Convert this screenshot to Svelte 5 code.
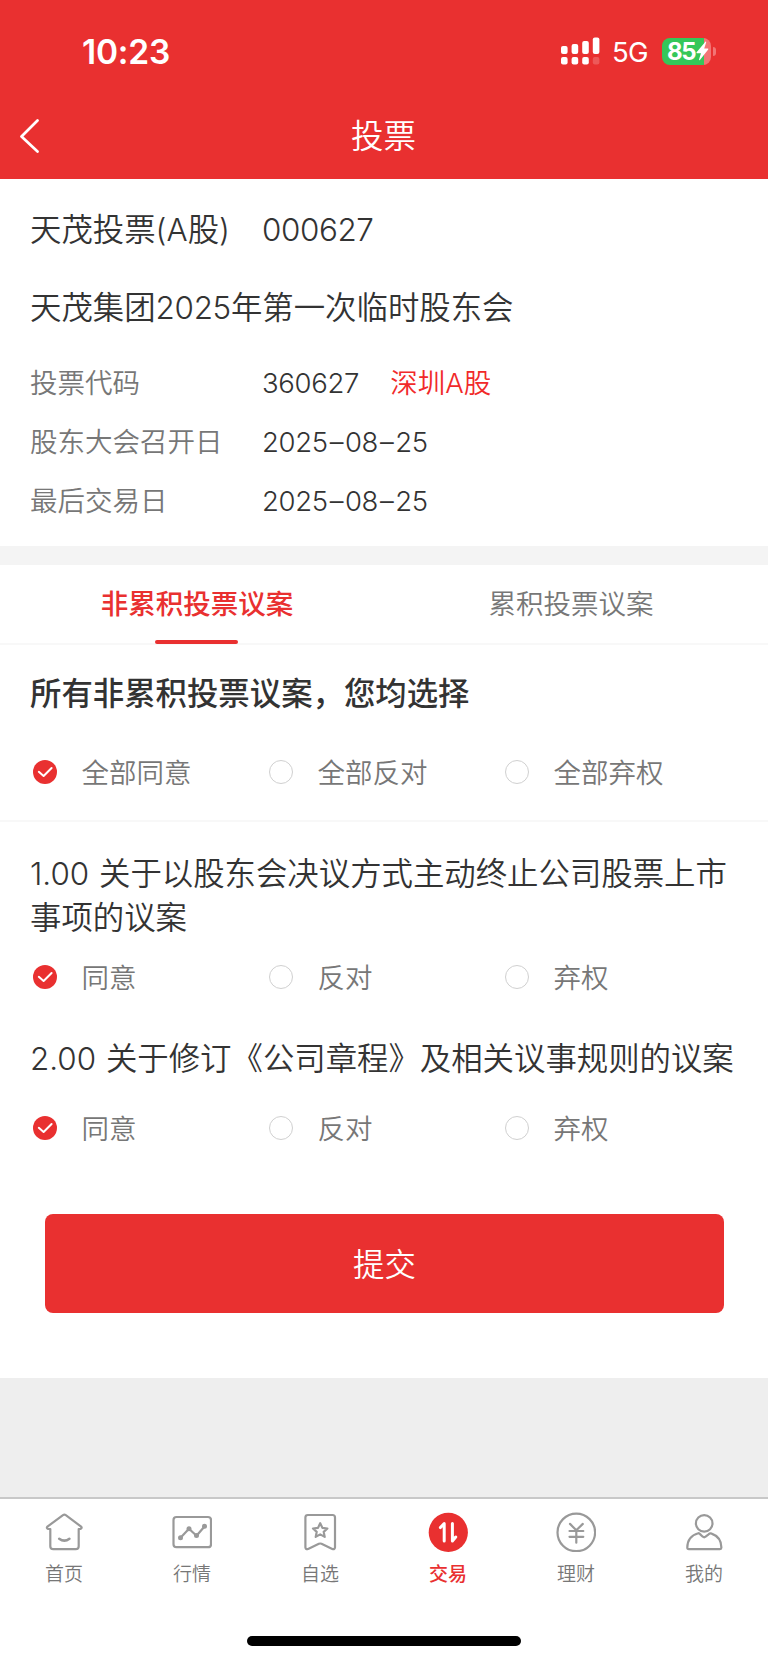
<script lang="ts">
  interface Proposal {
    id: string;
    title: string;
    choice: number;
  }

  const choices = ['同意', '反对', '弃权'];
  const tabs = ['非累积投票议案', '累积投票议案'];
  const navItems = [
    { icon: 'home', label: '首页' },
    { icon: 'market', label: '行情' },
    { icon: 'favorite', label: '自选' },
    { icon: 'trade', label: '交易' },
    { icon: 'wealth', label: '理财' },
    { icon: 'mine', label: '我的' },
  ];

  let activeTab = 0;
  let activeNav = 'trade';
  let allChoice = 0;
  let proposals: Proposal[] = [
    { id: '1.00', title: '关于以股东会决议方式主动终止公司股票上市事项的议案', choice: 0 },
    { id: '2.00', title: '关于修订《公司章程》及相关议事规则的议案', choice: 0 },
  ];

  function chooseAll(index: number) {
    allChoice = index;
    proposals = proposals.map(p => ({ ...p, choice: index }));
  }

  function choose(proposal: Proposal, index: number) {
    proposal.choice = index;
    proposals = proposals;
    allChoice = proposals.every(p => p.choice === index) ? index : -1;
  }
</script>

<div class="page">
  <header>
    <div class="status">
      <span class="time">10:23</span>
      <div class="signals">
        <svg class="bars" width="39" height="28" viewBox="0 0 39 28" fill="#fff">
          <rect x="0" y="9" width="6.6" height="8" rx="2" />
          <rect x="10.6" y="7" width="6.6" height="10" rx="2" />
          <rect x="21.2" y="4" width="6.6" height="13" rx="2" />
          <rect x="31.8" y="0.5" width="6.6" height="16.5" rx="2" />
          <rect x="0" y="20" width="6.6" height="7.5" rx="2" />
          <rect x="10.6" y="20" width="6.6" height="7.5" rx="2" />
          <rect x="21.2" y="20" width="6.6" height="7.5" rx="2" />
          <rect x="31.8" y="20" width="6.6" height="7.5" rx="2" opacity="0.2" />
        </svg>
        <span class="network">5G</span>
        <div class="battery">
          <span class="level">85</span>
          <svg width="13" height="20" viewBox="0 0 13 20" fill="#fff">
            <path d="M9.6 0.6 0.6 11.2q-.5.9.5 1h3.9L3 18.6q0 1 .9.5L12.2 8.4q.5-.9-.5-1H8.2l2-6.2q0-1-.6-.6z" />
          </svg>
        </div>
        <i class="battery-cap"></i>
      </div>
    </div>
    <div class="titlebar">
      <button class="back" aria-label="返回">
        <svg width="22" height="36" viewBox="0 0 22 36" fill="none" stroke="#fff" stroke-width="2.7" stroke-linecap="round" stroke-linejoin="round">
          <path d="M18.5 1.5 2.5 17.5 18.5 32.5" />
        </svg>
      </button>
      <h1>投票</h1>
    </div>
  </header>

  <section class="info">
    <div class="row stock"><span class="name">天茂投票(A股)</span><span class="code">000627</span></div>
    <div class="row meeting">天茂集团<span class="year">2025</span>年第一次临时股东会</div>
    <div class="row detail"><span class="name">投票代码</span><span class="value">360627</span><span class="market">深圳A股</span></div>
    <div class="row detail"><span class="name">股东大会召开日</span><span class="value">2025<i>–</i>08<i>–</i>25</span></div>
    <div class="row detail"><span class="name">最后交易日</span><span class="value">2025<i>–</i>08<i>–</i>25</span></div>
  </section>

  <nav class="tabs">
    {#each tabs as tab, i}
      <button class="tab" class:active={i === activeTab} on:click={() => (activeTab = i)}>{tab}</button>
    {/each}
  </nav>

  <section class="all">
    <h2>所有非累积投票议案，您均选择</h2>
    <div class="choices">
      {#each choices as label, i}
        <button class="choice" on:click={() => chooseAll(i)}>
          <span class="radio" class:checked={allChoice === i}>
            {#if allChoice === i}
              <svg width="24" height="24" viewBox="0 0 24 24"><path d="M5.8 11.8 10.6 16 18.6 8" /></svg>
            {/if}
          </span>
          <span class="label">全部{label}</span>
        </button>
      {/each}
    </div>
  </section>

  <section class="proposals">
    {#each proposals as proposal}
      <div class="proposal">
        <p>{proposal.id} {proposal.title}</p>
        <div class="choices">
          {#each choices as label, i}
            <button class="choice" on:click={() => choose(proposal, i)}>
              <span class="radio" class:checked={proposal.choice === i}>
                {#if proposal.choice === i}
                  <svg width="24" height="24" viewBox="0 0 24 24"><path d="M5.8 11.8 10.6 16 18.6 8" /></svg>
                {/if}
              </span>
              <span class="label">{label}</span>
            </button>
          {/each}
        </div>
      </div>
    {/each}
    <button class="submit">提交</button>
  </section>

  <footer>
    <nav class="bottom">
      {#each navItems as item}
        <button class="nav-item" class:active={item.icon === activeNav} on:click={() => (activeNav = item.icon)}>
          <svg width="40" height="40" viewBox="0 0 40 40" fill="none" stroke="currentColor" stroke-width="2.2" stroke-linecap="round" stroke-linejoin="round">
            {#if item.icon === 'home'}
              <path d="M6.3 17H4.2Q2 16 3.4 14.6L19 3.2q1.4-1 2.8 0l15.3 11.4Q38.5 16 36.3 17H34.7V34.2q0 3-3 3H9.3q-3 0-3-3z" />
              <path d="M15.2 26.8q5.2 3.8 10.2 0" stroke-width="2.6" />
            {:else if item.icon === 'market'}
              <rect x="1.5" y="5" width="37.5" height="30.2" rx="3" />
              <path d="M8.5 25.8 17 16.7 24.5 23.7 32.5 14.5" />
              <g fill="currentColor" stroke="none">
                <circle cx="8.5" cy="25.8" r="2.5" />
                <circle cx="17" cy="16.7" r="2.5" />
                <circle cx="24.5" cy="23.5" r="2.5" />
                <circle cx="32.5" cy="14.3" r="2.5" />
              </g>
            {:else if item.icon === 'favorite'}
              <path d="M7.8 3h24.7q2.5 0 2.5 2.5V35.3q-.3 2.5-2.7 1.7L21.5 31.8q-1.300-.6-2.600 0L8.100 37q-2.400.8-2.700-1.700V5.500Q5.400 3 7.800 3z" />
              <path d="m20.200 11.200 2.200 4.700 5 .6-3.700 3.400 1 5-4.500-2.500-4.500 2.500 1-5-3.700-3.400 5-.6z" />
            {:else if item.icon === 'trade'}
              <circle cx="20.3" cy="20.4" r="19.6" fill="currentColor" stroke="none" />
              <g stroke="#fff" stroke-width="3">
                <path d="M16.2 29V11.5L12.4 15.6" />
                <path d="M24.4 11.5V29L27.7 25" />
              </g>
            {:else if item.icon === 'wealth'}
              <circle cx="20.3" cy="20.4" r="18.8" />
              <path d="M14 11.9 20.3 18.2 26.8 11.9M20.3 18.2V30.7M13.5 19H27.3M13.5 24.8H27.3" />
            {:else}
              <circle cx="20.2" cy="11.4" r="8.3" />
              <path d="M14.3 21.200q1.300 0 2.200 1.400l2.300 2.100q1.400 1.100 2.800 0l3-2.400q1.300-1.400 3-.7C34.500 24 37.300 29 37.400 35.500q0 1.500-1.500 1.600H4.900q-1.600 0-1.600-1.600C3.400 28.500 7 23.200 14.300 21.200z" />
            {/if}
          </svg>
          <span>{item.label}</span>
        </button>
      {/each}
    </nav>
    <div class="home-indicator"></div>
  </footer>
</div>

<style>
  :global(body) {
    background: #fff;
  }
  .page {
    width: 768px;
    height: 1663px;
    display: flex;
    flex-direction: column;
    overflow: hidden;
    background: #eee;
    color: #333;
    font-family: Inter, 'Noto Sans CJK SC', sans-serif;
    font-size: 31.4px;
    font-weight: 350;
  }
  button {
    padding: 0;
    border: none;
    background: none;
    color: inherit;
    font: inherit;
    cursor: pointer;
  }
  h1, h2, p {
    margin: 0;
  }
  header {
    height: 179px;
    background: #e93030;
    color: #fff;
  }
  .status {
    height: 94px;
    padding: 8px 52px 0 82px;
    box-sizing: border-box;
    display: flex;
    align-items: center;
    justify-content: space-between;
  }
  .time {
    padding-top: 1px;
    font-size: 33.5px;
    font-weight: 600;
    letter-spacing: -0.2px;
  }
  .signals {
    display: flex;
    align-items: center;
  }
  .network {
    margin-left: 12px;
    width: 38px;
    font-size: 27.5px;
    font-weight: 400;
    line-height: 28px;
    letter-spacing: -0.6px;
    padding-top: 2px;
  }
  .battery {
    margin-left: 12px;
    width: 49px;
    height: 27px;
    border-radius: 8px;
    background: linear-gradient(90deg, #34c759 42px, #f27575 42px);
    display: flex;
    align-items: center;
    padding-left: 5px;
    box-sizing: border-box;
  }
  .level {
    width: 29px;
    font-size: 24px;
    font-weight: 700;
    line-height: 27px;
    letter-spacing: -1.4px;
  }
  .battery-cap {
    margin-left: 2px;
    width: 3px;
    height: 9px;
    border-radius: 0 4px 4px 0;
    background: #f27575;
  }
  .titlebar {
    height: 85px;
    display: grid;
    grid-template-columns: 80px 1fr 80px;
    align-items: center;
  }
  .back {
    height: 36px;
    padding-left: 19px;
    text-align: left;
  }
  .back svg {
    display: block;
  }
  h1 {
    padding: 1px 1px 0 0;
    font-size: 32.5px;
    font-weight: 350;
    line-height: 44px;
    text-align: center;
  }
  .info {
    height: 367px;
    padding: 22px 30px 0;
    box-sizing: border-box;
    background: #fff;
  }
  .row {
    display: flex;
    align-items: center;
    line-height: 59px;
  }
  .name {
    width: 232px;
  }
  .stock {
    height: 59px;
  }
  .meeting {
    height: 59px;
    margin: 19px 0 16px;
  }
  .detail {
    height: 59px;
    font-size: 27.5px;
  }
  .detail .name {
    color: #777;
  }
  .code {
    letter-spacing: -0.4px;
  }
  .year {
    letter-spacing: -0.3px;
  }
  .value {
    letter-spacing: -0.3px;
  }
  .value i {
    font-style: normal;
    padding: 0 1.8px;
  }
  .market {
    margin-left: 31px;
    color: #f12a2a;
  }
  .tabs {
    height: 99px;
    padding: 0 10px;
    box-sizing: border-box;
    display: flex;
    background: #fff;
    border-top: 19px solid #f4f4f4;
    border-bottom: 2px solid #f8f8f8;
  }
  .tab {
    position: relative;
    flex: 1;
    padding-bottom: 4px;
    font-size: 27.5px;
    color: #777;
  }
  .tab.active {
    color: #e93030;
    font-weight: 500;
  }
  .tab.active::after {
    content: '';
    position: absolute;
    left: 50%;
    bottom: -1px;
    width: 83px;
    height: 4px;
    margin-left: -42px;
    border-radius: 2px;
    background: #e93030;
  }
  .all {
    height: 177px;
    padding: 27px 30px 0;
    box-sizing: border-box;
    background: #fff;
    border-bottom: 2px solid #f8f8f8;
  }
  h2 {
    font-size: 31.4px;
    font-weight: 500;
    line-height: 44px;
  }
  .choices {
    display: flex;
    height: 40px;
  }
  .all .choices {
    margin-top: 36px;
  }
  .choice {
    width: 236px;
    display: flex;
    align-items: center;
    font-size: 27.5px;
    color: #777;
  }
  .label {
    padding-bottom: 2px;
  }
  .radio {
    width: 24px;
    height: 24px;
    margin: 0 24px 0 3.4px;
    box-sizing: border-box;
    border: 1.5px solid #d0d0d0;
    border-radius: 50%;
  }
  .radio.checked {
    border: none;
    background: #e93030;
  }
  .radio svg {
    display: block;
    fill: none;
    stroke: #fff;
    stroke-width: 2;
    stroke-linecap: round;
    stroke-linejoin: round;
  }
  .proposals {
    height: 556px;
    padding: 30px 30px 0;
    box-sizing: border-box;
    background: #fff;
  }
  .proposal {
    margin-bottom: 41px;
  }
  .proposal p {
    line-height: 44px;
    margin-bottom: 17px;
    margin-right: -8px;
    word-spacing: 1px;
  }
  .proposal + .proposal p {
    margin-top: -1px;
    margin-bottom: 27px;
  }
  .submit {
    display: block;
    width: 679px;
    height: 99px;
    margin: 66px 0 0 15px;
    padding-bottom: 3px;
    border-radius: 8px;
    background: #e93030;
    color: #fff;
  }
  footer {
    margin-top: auto;
    height: 166px;
    background: #fff;
    border-top: 2px solid #c8c8c8;
    box-sizing: border-box;
  }
  .bottom {
    display: flex;
    height: 137px;
    padding-top: 13px;
    box-sizing: border-box;
  }
  .nav-item {
    flex: 1;
    display: flex;
    flex-direction: column;
    align-items: center;
    font-size: 19px;
    line-height: 24px;
    color: #999;
  }
  .nav-item span {
    margin-top: 11px;
    color: #777;
  }
  .nav-item.active,
  .nav-item.active span {
    color: #e93030;
    font-weight: 500;
  }
  .home-indicator {
    width: 274px;
    height: 10px;
    margin: 0 auto;
    border-radius: 5px;
    background: #000;
  }
</style>
